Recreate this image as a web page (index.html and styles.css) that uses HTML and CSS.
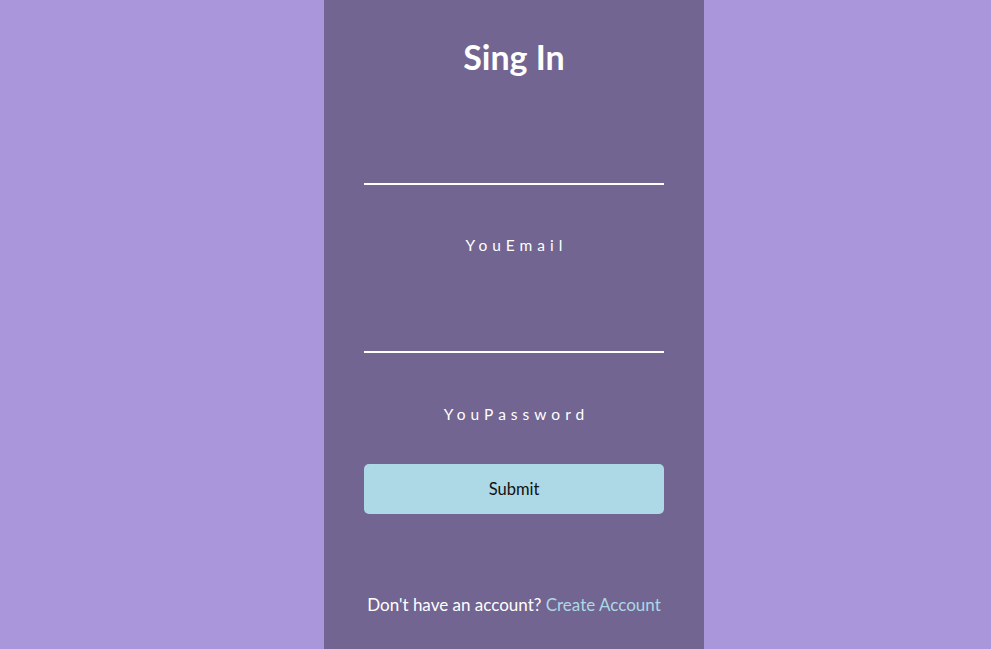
FILE: index.html
```html
<!DOCTYPE html>
<html>
<head>
<meta charset="utf-8">
<link rel="stylesheet" href="styles.css">
</head>
<body>
<div class="panel">
  <h1 class="title">Sing In</h1>
  <div class="field">
    <div class="input"></div>
    <label class="label">YouEmail</label>
  </div>
  <div class="field">
    <div class="input"></div>
    <label class="label">YouPassword</label>
  </div>
  <button class="submit">Submit</button>
  <p class="footer">Don't have an account? <a class="link">Create Account</a></p>
</div>
</body>
</html>
```
FILE: styles.css
```css
html, body {
  margin: 0;
  height: 100%;
}
body {
  background: #aa96da;
  font-family: "Lato", "Noto Sans", sans-serif;
  display: flex;
}
.panel {
  margin-left: 324px;
  width: 380px;
  height: 649px;
  background: #726591;
  display: flex;
  flex-direction: column;
  align-items: center;
  box-sizing: border-box;
  padding: 0 40px;
}
.title {
  margin: 37px 0 0;
  font-size: 34px;
  font-weight: 700;
  color: #fff;
  line-height: 40px;
}
.field {
  width: 300px;
  display: flex;
  flex-direction: column;
  align-items: center;
}
.input {
  width: 300px;
  height: 108px;
  border-bottom: 2px solid #fff;
  box-sizing: border-box;
}
.field + .field .input { height: 98px; }
.label {
  color: #fff;
  font-size: 15.5px;
  letter-spacing: 5px;
  line-height: 20px;
  margin-top: 50px;
  padding-left: 5px;
}
.field + .field .label { margin-top: 51px; }
.submit {
  margin-top: 40px;
  width: 300px;
  height: 50px;
  border: none;
  border-radius: 5px;
  background: #add8e6;
  font-family: inherit;
  font-size: 16.5px;
  color: #111;
}
.footer {
  margin: 81px 0 0;
  color: #fff;
  font-size: 17px;
  line-height: 20px;
}
.link {
  color: #add8e6;
}
```
